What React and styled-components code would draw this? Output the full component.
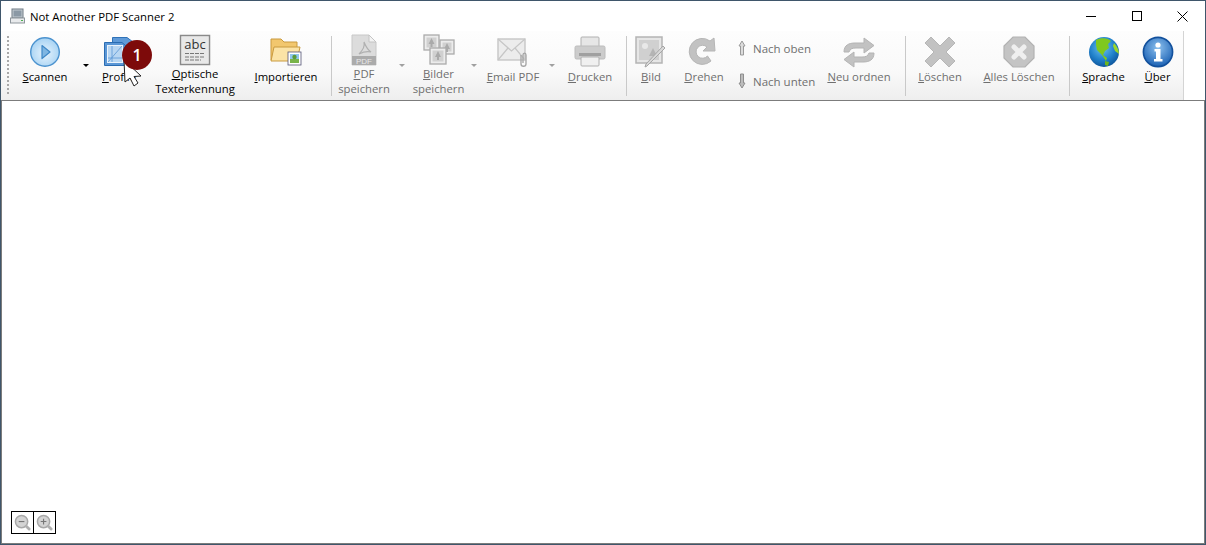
import React from "react";
import styled, { createGlobalStyle } from "styled-components";

const GlobalStyle = createGlobalStyle`
  html, body, #root { margin: 0; padding: 0; height: 100%; }
  body { font-family: "Open Sans", "Noto Sans", "Liberation Sans", sans-serif; background: #fff; overflow: hidden; }
`;

const Window = styled.div`
  position: relative;
  height: 100%;
  box-sizing: border-box;
  border: 1px solid #3f566b;
  display: flex;
  flex-direction: column;
  background: #fff;
`;

const TitleBar = styled.div`
  height: 30px;
  display: flex;
  align-items: center;
  padding-left: 9px;
  flex: none;
`;

const TitleText = styled.span`
  margin-left: 5px;
  font-size: 11.35px;
  color: #000;
  flex: 1;
`;

const WinButton = styled.div`
  width: 45.5px;
  height: 30px;
  display: flex;
  align-items: center;
  justify-content: center;
`;

const Toolbar = styled.div`
  height: 69px;
  width: 1183px;
  flex: none;
  display: flex;
  align-items: stretch;
  box-sizing: border-box;
  padding-left: 6px;
  background: linear-gradient(#fdfdfd 0%, #f9f9f9 60%, #eeeeee 100%);
  border-right: 1px solid #d4d4d4;
`;

const Grip = styled.div`
  width: 5px;
  margin: 5px 0 6px 0;
  background-image: linear-gradient(#a8a8a8 2px, transparent 2px);
  background-size: 2px 4px;
  background-repeat: repeat-y;
`;

const Tool = styled.div`
  width: ${(p) => p.$w}px;
  flex: none;
  display: flex;
  flex-direction: column;
  align-items: center;
  box-sizing: border-box;
  padding-top: ${(p) => p.$top ?? 5}px;
`;

const IconSlot = styled.div`
  height: 32px;
  display: flex;
  align-items: center;
  justify-content: center;
`;

const Label = styled.div`
  margin-top: ${(p) => (p.$two ? 0 : 1)}px;
  font-size: 11.3px;
  line-height: 15px;
  text-align: center;
  white-space: nowrap;
  color: ${(p) => (p.$off ? "#6f6f6f" : "#000")};
`;

const Arrow = styled.div`
  width: ${(p) => p.$w}px;
  flex: none;
  display: flex;
  justify-content: center;
  padding-top: 33px;
  &::before {
    content: "";
    display: block;
    width: 0;
    height: 0;
    border-left: 3px solid transparent;
    border-right: 3px solid transparent;
    border-top: 3px solid ${(p) => (p.$off ? "#a0a0a0" : "#000")};
  }
`;

const Sep = styled.div`
  width: 1px;
  flex: none;
  margin: 5px ${(p) => p.$r ?? 4}px 4px ${(p) => p.$l ?? 4}px;
  background: #c9c9c9;
`;

const SmallStack = styled.div`
  width: ${(p) => p.$w}px;
  flex: none;
  display: flex;
  flex-direction: column;
  padding-top: 7px;
  gap: 13px;
`;

const SmallRow = styled.div`
  display: flex;
  align-items: center;
  gap: 6px;
  height: 20px;
  font-size: 11.5px;
  color: #6f6f6f;
  white-space: nowrap;
`;

const Content = styled.div`
  flex: 1;
  border: 1px solid #7c7c7c;
  display: flex;
  flex-direction: column;
  justify-content: flex-end;
  padding: 0 0 9px 9px;
`;

const ZoomBar = styled.div`
  display: flex;
`;

const ZoomBox = styled.div`
  width: 23px;
  height: 23px;
  box-sizing: border-box;
  border: 1px solid #000;
  margin-left: ${(p) => (p.$join ? "-1px" : "0")};
  display: flex;
  align-items: center;
  justify-content: center;
`;

const Badge = styled.div`
  position: absolute;
  left: 121px;
  top: 39px;
  width: 30px;
  height: 30px;
  border-radius: 50%;
  background: #7d0a0a;
  color: #fff;
  font-size: 16px;
  font-weight: 600;
  display: flex;
  align-items: center;
  justify-content: center;
`;

const Cursor = styled.svg`
  position: absolute;
  left: 121px;
  top: 57px;
`;

const AppIcon = () => (
  <svg width="15" height="16" viewBox="0 0 15 16">
    <rect x="2" y="1" width="11" height="9" fill="#c4ccd2" stroke="#6e7a84" />
    <rect x="3.5" y="2.5" width="8" height="6" fill="#8b99a5" />
    <rect x="0.5" y="10" width="14" height="5" fill="#e8eaec" stroke="#8e969c" />
    <rect x="11" y="12" width="2" height="1" fill="#4caf50" />
  </svg>
);

const ScanIcon = () => (
  <svg width="32" height="32" viewBox="0 0 32 32">
    <defs>
      <radialGradient id="scanFill" cx="50%" cy="55%" r="55%">
        <stop offset="0%" stopColor="#e8f4fd" />
        <stop offset="100%" stopColor="#a6d2f3" />
      </radialGradient>
    </defs>
    <circle cx="16" cy="16" r="14.3" fill="url(#scanFill)" stroke="#4c93cf" strokeWidth="1.4" />
    <path d="M13 9.5 L21 16 L13 22.5 Z" fill="#7fb6e2" stroke="#3f88c7" strokeWidth="1.2" strokeLinejoin="round" />
  </svg>
);

const ProfilesIcon = () => (
  <svg width="32" height="32" viewBox="0 0 32 32">
    <path d="M9.5 1.5 H24 L30 6 V24 H9.5 Z" fill="#5f9ad8" stroke="#2f72b8" />
    <path d="M1.5 6.5 H19 L23 10 V29.5 H1.5 Z" fill="#5b97d6" stroke="#2a6cb2" />
    <rect x="4.5" y="9.5" width="15" height="17" fill="#b8d6f2" stroke="#eaf3fb" />
    <path d="M5 26 L19 10 M5 22 H19 M9 10 V26" stroke="#5b97d6" strokeWidth="0.8" />
  </svg>
);

const OcrIcon = () => (
  <svg width="32" height="32" viewBox="0 0 32 32">
    <rect x="1.5" y="1.5" width="29" height="29" fill="#f1f1f1" stroke="#8a8a8a" strokeWidth="1.5" />
    <rect x="3" y="3" width="26" height="26" fill="#e8e8e8" />
    <text x="16" y="15" textAnchor="middle" fontSize="13" fontFamily="Open Sans, sans-serif" fill="#333">abc</text>
    <path d="M6 19.5 H26 M6 23 H26 M6 26 H22" stroke="#777" strokeWidth="1" strokeDasharray="4 1" />
  </svg>
);

const FolderIcon = () => (
  <svg width="32" height="32" viewBox="0 0 32 32">
    <path d="M1 3 H11 L14 6 H27 V24 H1 Z" fill="#f2c76e" stroke="#c99a3f" />
    <path d="M1 25 L4 11 H30 L27 25 Z" fill="#fbe3a6" stroke="#c99a3f" />
    <rect x="18" y="16" width="13" height="13" fill="#fff" stroke="#557" strokeWidth="0.8" />
    <rect x="20" y="18" width="9" height="5" fill="#8fc6ec" />
    <rect x="20" y="23" width="9" height="4" fill="#79b44a" />
    <circle cx="24.5" cy="21" r="2.2" fill="#5a9a3a" />
  </svg>
);

const PdfIcon = () => (
  <svg width="32" height="32" viewBox="0 0 32 32">
    <path d="M4 1 H21 L28 8 V31 H4 Z" fill="#dcdcdc" stroke="#c8c8c8" />
    <path d="M21 1 V8 H28 Z" fill="#f3f3f3" stroke="#c4c4c4" />
    <path d="M11 20 C14 17 17 12 16 8 C18 13 20 16 23 18 C19 17 15 18 11 20 Z" fill="none" stroke="#b0b0b0" strokeWidth="1.2" />
    <rect x="4" y="22" width="24" height="9" fill="#ababab" />
    <text x="16" y="29.5" textAnchor="middle" fontSize="8" fontFamily="Liberation Sans, sans-serif" fill="#e8e8e8">PDF</text>
  </svg>
);

const Photo = ({ x, y, s }) => (
  <g>
    <rect x={x} y={y} width={s} height={s} fill="#ececec" stroke="#ababab" strokeWidth="1.3" />
    <rect x={x + 2.5} y={y + 2.5} width={s - 5} height={s - 5} fill="#d0d0d0" />
    <path d={`M${x + s / 2} ${y + 3} l3 6 h-2 v3 h-2 v-3 h-2 z`} fill="#aaaaaa" />
  </g>
);

const ImagesIcon = () => (
  <svg width="32" height="32" viewBox="0 0 32 32">
    <Photo x={1} y={1} s={15} />
    <Photo x={17} y={6} s={14} />
    <Photo x={7} y={14} s={16} />
  </svg>
);

const MailIcon = () => (
  <svg width="32" height="32" viewBox="0 0 32 32">
    <rect x="1" y="3" width="27" height="21" fill="#ececec" stroke="#c6c6c6" strokeWidth="1.4" />
    <path d="M1 3 L14.5 15 L28 3 M1 24 L11 12 M28 24 L18 12" fill="none" stroke="#c6c6c6" strokeWidth="1.2" />
    <path d="M24 19 V28 C24 31 29 31 29 28 V19 C29 16.5 26 16.5 26 19 V27" fill="none" stroke="#a4a4a4" strokeWidth="1.3" />
  </svg>
);

const PrintIcon = () => (
  <svg width="32" height="32" viewBox="0 0 32 32">
    <rect x="7" y="1" width="18" height="11" rx="1" fill="#e6e6e6" stroke="#b0b0b0" />
    <rect x="1" y="10" width="30" height="13" rx="1.5" fill="#cccccc" stroke="#bcbcbc" />
    <rect x="5" y="17" width="22" height="3" fill="#a0a0a0" />
    <rect x="7" y="21" width="18" height="9" rx="1" fill="#f0f0f0" stroke="#b0b0b0" />
  </svg>
);

const EditImageIcon = () => (
  <svg width="32" height="32" viewBox="0 0 32 32">
    <rect x="1" y="1" width="26" height="26" fill="#e6e6e6" stroke="#b4b4b4" strokeWidth="1.5" />
    <rect x="4" y="4" width="20" height="20" fill="#d0d0d0" />
    <circle cx="10" cy="10" r="3" fill="#e8e8e8" />
    <path d="M14 20 l4 -8 l4 8 z" fill="#b4b4b4" />
    <path d="M30 12 L12 30 L10 31 L11 28 L28 10 Z" fill="#d8d8d8" stroke="#a6a6a6" />
  </svg>
);

const RotateIcon = () => (
  <svg width="32" height="32" viewBox="0 0 32 32">
    <path d="M23 25 A13 13 0 1 1 22 5 L26 2 L27 15 L15 15 L19 11 A6.5 6.5 0 1 0 19.5 20 Z" fill="#c2c2c2" stroke="#b6b6b6" strokeLinejoin="round" />
  </svg>
);

const ReorderIcon = () => (
  <svg width="32" height="32" viewBox="0 0 32 32">
    <path d="M1 16 C1 9 6 7 12 7 H21 V2 L31 9.5 L21 17 V12 H13 C9 12 7 13 6 16 Z" fill="#c2c2c2" stroke="#b4b4b4" strokeLinejoin="round" />
    <path d="M31 17 C31 24 26 26 20 26 H11 V31 L1 23.5 L11 16 V21 H19 C23 21 25 20 26 17 Z" fill="#c2c2c2" stroke="#b4b4b4" strokeLinejoin="round" />
  </svg>
);

const DeleteIcon = () => (
  <svg width="32" height="32" viewBox="0 0 32 32">
    <path d="M7 1 L16 10 L25 1 L31 7 L22 16 L31 25 L25 31 L16 22 L7 31 L1 25 L10 16 L1 7 Z" fill="#c2c2c2" stroke="#b6b6b6" strokeLinejoin="round" />
  </svg>
);

const DeleteAllIcon = () => (
  <svg width="32" height="32" viewBox="0 0 32 32">
    <path d="M10 1 H22 L31 10 V22 L22 31 H10 L1 22 V10 Z" fill="#c4c4c4" stroke="#b2b2b2" strokeWidth="1.2" />
    <path d="M11 11 L21 21 M21 11 L11 21" stroke="#efefef" strokeWidth="5" strokeLinecap="round" />
  </svg>
);

const GlobeIcon = () => (
  <svg width="32" height="32" viewBox="0 0 32 32">
    <defs>
      <radialGradient id="sea" cx="45%" cy="35%" r="70%">
        <stop offset="0%" stopColor="#6cc4f2" />
        <stop offset="60%" stopColor="#1f7fc9" />
        <stop offset="100%" stopColor="#0c4e93" />
      </radialGradient>
    </defs>
    <circle cx="16" cy="16" r="15" fill="url(#sea)" />
    <path d="M8 4 C13 1 21 2 23 5 L20 8 L21 12 L17 15 L15 19 L19 22 L18 25 L14 19 L9 14 L8 9 Z" fill="#7fc81e" />
    <path d="M26 7 C29 10 31 14 31 18 L27 15 L25 10 Z" fill="#9bd62b" />
    <path d="M17 25 L21 26 L20 30 L17 29 Z" fill="#6db51a" />
  </svg>
);

const InfoIcon = () => (
  <svg width="32" height="32" viewBox="0 0 32 32">
    <defs>
      <radialGradient id="infoFill" cx="50%" cy="35%" r="65%">
        <stop offset="0%" stopColor="#8cc0ee" />
        <stop offset="100%" stopColor="#1c62b4" />
      </radialGradient>
    </defs>
    <circle cx="16" cy="16" r="14.6" fill="url(#infoFill)" stroke="#12509c" strokeWidth="1.6" />
    <circle cx="16" cy="9" r="2.6" fill="#fff" />
    <path d="M12.5 13 H18.5 V23 H20.5 V25.5 H12 V23 H14 V15.5 H12.5 Z" fill="#fff" />
  </svg>
);

const UpIcon = () => (
  <svg width="10" height="16" viewBox="0 0 10 16">
    <path d="M5 1 L8 6 H6.5 V15 H3.5 V6 H2 Z" fill="#dcdcdc" stroke="#9a9a9a" />
  </svg>
);

const DownIcon = () => (
  <svg width="10" height="16" viewBox="0 0 10 16">
    <path d="M5 15 L8 10 H6.5 V1 H3.5 V10 H2 Z" fill="#bcbcbc" stroke="#8e8e8e" />
  </svg>
);

const ZoomGlass = ({ plus }) => (
  <svg width="17" height="17" viewBox="0 0 18 18">
    <circle cx="8" cy="8" r="6.5" fill="#d4d4d4" stroke="#a8a8a8" strokeWidth="1.6" />
    <path d="M13 13 L16 16" stroke="#b0b0b0" strokeWidth="3" strokeLinecap="round" />
    <path d={plus ? "M5 8 H11 M8 5 V11" : "M5 8 H11"} stroke="#777" strokeWidth="1.2" />
  </svg>
);

const First = ({ text }) => (
  <>
    <u>{text[0]}</u>
    {text.slice(1)}
  </>
);

export default function App() {
  return (
    <Window>
      <GlobalStyle />
      <TitleBar>
        <AppIcon />
        <TitleText>Not Another PDF Scanner 2</TitleText>
        <WinButton>
          <svg width="10" height="10"><path d="M0 5.5 H10" stroke="#000" /></svg>
        </WinButton>
        <WinButton>
          <svg width="10" height="10"><rect x="0.5" y="0.5" width="9" height="9" fill="none" stroke="#000" /></svg>
        </WinButton>
        <WinButton>
          <svg width="11" height="11"><path d="M0.5 0.5 L10.5 10.5 M10.5 0.5 L0.5 10.5" stroke="#000" /></svg>
        </WinButton>
      </TitleBar>
      <Toolbar>
        <Grip />
        <Tool $w={66}>
          <IconSlot><ScanIcon /></IconSlot>
          <Label><First text="Scannen" /></Label>
        </Tool>
        <Arrow $w={15} />
        <Tool $w={52}>
          <IconSlot><ProfilesIcon /></IconSlot>
          <Label><First text="Profile" /></Label>
        </Tool>
        <Tool $w={100} $top={3}>
          <IconSlot><OcrIcon /></IconSlot>
          <Label $two><First text="Optische" /><br />Texterkennung</Label>
        </Tool>
        <Tool $w={82}>
          <IconSlot><FolderIcon /></IconSlot>
          <Label><First text="Importieren" /></Label>
        </Tool>
        <Sep />
        <Tool $w={56} $top={3}>
          <IconSlot><PdfIcon /></IconSlot>
          <Label $two $off><First text="PDF" /><br />speichern</Label>
        </Tool>
        <Arrow $w={20} $off />
        <Tool $w={53} $top={3}>
          <IconSlot><ImagesIcon /></IconSlot>
          <Label $two $off><First text="Bilder" /><br />speichern</Label>
        </Tool>
        <Arrow $w={17} $off />
        <Tool $w={62}>
          <IconSlot><MailIcon /></IconSlot>
          <Label $off><First text="Email PDF" /></Label>
        </Tool>
        <Arrow $w={16} $off />
        <Tool $w={60}>
          <IconSlot><PrintIcon /></IconSlot>
          <Label $off><First text="Drucken" /></Label>
        </Tool>
        <Sep $l={6} />
        <Tool $w={40}>
          <IconSlot><EditImageIcon /></IconSlot>
          <Label $off><First text="Bild" /></Label>
        </Tool>
        <Tool $w={66}>
          <IconSlot><RotateIcon /></IconSlot>
          <Label $off><First text="Drehen" /></Label>
        </Tool>
        <SmallStack $w={86}>
          <SmallRow><UpIcon />Nach oben</SmallRow>
          <SmallRow><DownIcon />Nach unten</SmallRow>
        </SmallStack>
        <Tool $w={72}>
          <IconSlot><ReorderIcon /></IconSlot>
          <Label $off><First text="Neu ordnen" /></Label>
        </Tool>
        <Sep $l={10} />
        <Tool $w={60}>
          <IconSlot><DeleteIcon /></IconSlot>
          <Label $off><First text="Löschen" /></Label>
        </Tool>
        <Tool $w={98}>
          <IconSlot><DeleteAllIcon /></IconSlot>
          <Label $off><First text="Alles Löschen" /></Label>
        </Tool>
        <Sep $l={1} />
        <Tool $w={59}>
          <IconSlot><GlobeIcon /></IconSlot>
          <Label><First text="Sprache" /></Label>
        </Tool>
        <Tool $w={49}>
          <IconSlot><InfoIcon /></IconSlot>
          <Label><First text="Über" /></Label>
        </Tool>
      </Toolbar>
      <Content>
        <ZoomBar>
          <ZoomBox><ZoomGlass /></ZoomBox>
          <ZoomBox $join><ZoomGlass plus /></ZoomBox>
        </ZoomBar>
      </Content>
      <Cursor width="22" height="30" viewBox="0 0 22 30">
        <path d="M2 2 L3 24 L8 20 L12 28 L16 25 L12 18.5 L19 18 Z" fill="#fff" stroke="#222" strokeWidth="1" strokeLinejoin="round" />
      </Cursor>
      <Badge>1</Badge>
    </Window>
  );
}
